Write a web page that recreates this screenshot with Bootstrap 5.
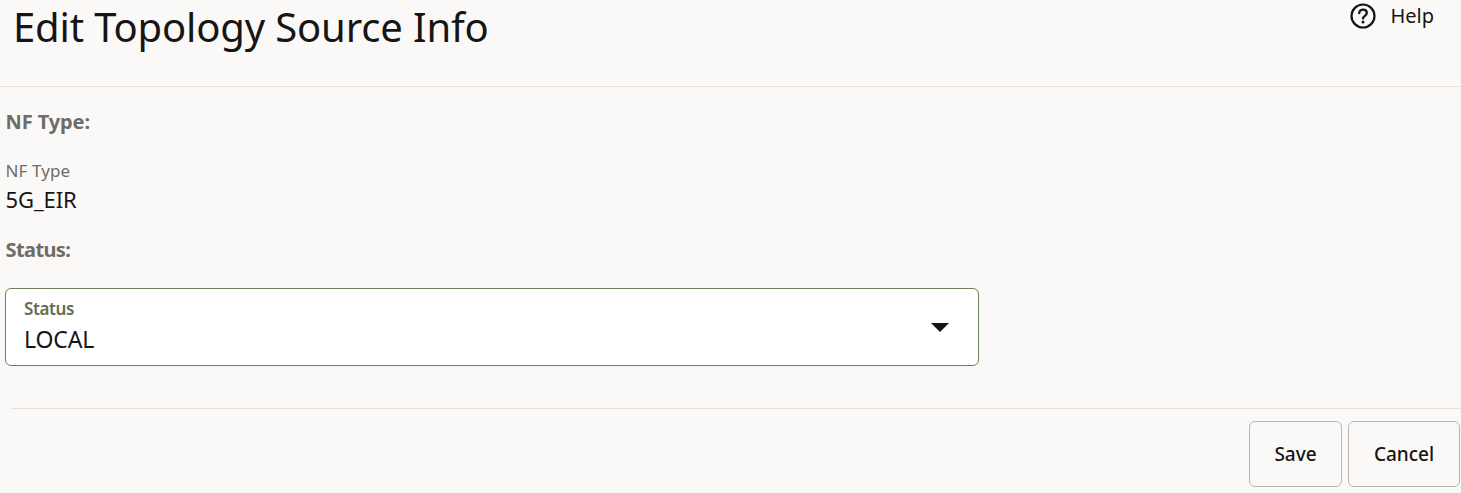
<!DOCTYPE html>
<html lang="en">
<head>
<meta charset="utf-8">
<title>Edit Topology Source Info</title>
<link href="https://cdn.jsdelivr.net/npm/bootstrap@5.3.0/dist/css/bootstrap.min.css" rel="stylesheet">
<style>
html,body{height:493px;overflow:hidden}
body{background:#fbf9f8;color:#161513;font-family:"Noto Sans","Open Sans",sans-serif}
.pg-head{height:87px;border-bottom:1px solid #e4e1dd}
.pg-title{font-size:40px;font-weight:400;line-height:50px;margin:2px 0 0 13px;letter-spacing:-.15px}
.help-link{color:#161513;font-size:20px;line-height:24px;text-decoration:none;margin:3px 27px 0 0;gap:14px}
.sec-label{font-size:20px;font-weight:700;color:#6f6c67;line-height:24px;margin:0;letter-spacing:-.1px}
.lbl-one{margin:23px 0 0 5.5px}
.field-cap{font-size:17px;line-height:20px;color:#6f6c67;margin:27px 0 0 5.5px;letter-spacing:.1px}
.field-val{font-size:22px;line-height:28px;margin:4px 0 0 5.5px;letter-spacing:-.1px}
.lbl-two{margin:25px 0 0 5.5px;letter-spacing:-.6px}
.pick-box{width:974px;height:78px;margin:26px 0 0 5px;background:#fff;border:1px solid #6b7f5a;border-radius:6px;padding:0 29px 0 18px}
.pick-text{padding-top:10px}
.pick-cap{font-size:17px;line-height:20px;color:#5f7052;font-weight:600;letter-spacing:-.4px}
.pick-val{font-size:23px;line-height:28px;margin-top:6px;letter-spacing:-.15px}
.pick-arrow{width:0;height:0;border-left:9px solid transparent;border-right:9px solid transparent;border-top:9px solid #161513}
.foot-rule{border-top:1px solid #e4e1dd;margin:42px 0 0 11px}
.foot-btns{gap:6px;margin-top:12px;padding-right:1px}
.act-btn{height:66px;background:#fbf9f8;border:1px solid #b9b6b1;border-radius:6px;color:#161513;font-size:19px;font-weight:500;padding:0}
.act-save{width:93px}
.act-cancel{width:112px}
</style>
</head>
<body>
<header class="pg-head d-flex justify-content-between align-items-start">
  <h1 class="pg-title">Edit Topology Source Info</h1>
  <a href="#" class="help-link d-flex align-items-center">
    <svg width="26" height="26" viewBox="0 0 26 26" fill="none" aria-hidden="true">
      <circle cx="13" cy="13" r="11.5" stroke="#161513" stroke-width="2.2"/>
      <path d="M9.2 10.2c0-2.2 1.7-3.6 3.8-3.6s3.8 1.3 3.8 3.3c0 2.9-3.8 2.9-3.8 5.6" stroke="#161513" stroke-width="2.3" stroke-linecap="round"/>
      <circle cx="13" cy="19" r="1.5" fill="#161513"/>
    </svg>
    <span>Help</span>
  </a>
</header>
<main>
  <p class="sec-label lbl-one">NF Type:</p>
  <div class="field-cap">NF Type</div>
  <div class="field-val">5G_EIR</div>
  <p class="sec-label lbl-two">Status:</p>
  <div class="pick-box d-flex justify-content-between align-items-center">
    <div class="pick-text align-self-start">
      <div class="pick-cap">Status</div>
      <div class="pick-val">LOCAL</div>
    </div>
    <span class="pick-arrow"></span>
  </div>
  <div class="foot-rule"></div>
  <div class="foot-btns d-flex justify-content-end">
    <button type="button" class="btn act-btn act-save">Save</button>
    <button type="button" class="btn act-btn act-cancel">Cancel</button>
  </div>
</main>
<script src="https://cdn.jsdelivr.net/npm/bootstrap@5.3.0/dist/js/bootstrap.bundle.min.js"></script>
</body>
</html>
